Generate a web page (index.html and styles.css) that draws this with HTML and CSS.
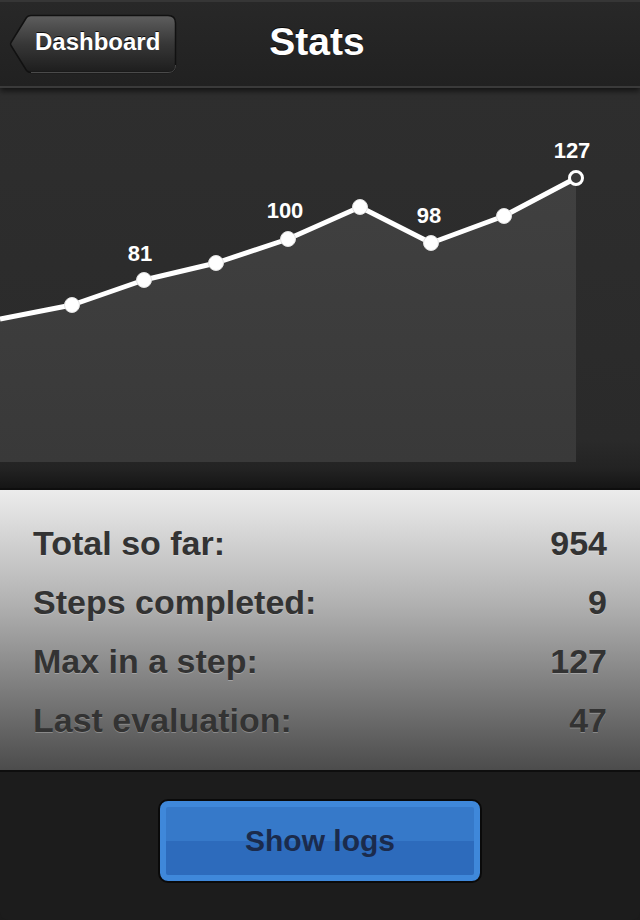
FILE: index.html
```html
<!DOCTYPE html>
<html lang="en">
<head>
    <meta charset="UTF-8">
    <meta name="viewport" content="width=device-width, initial-scale=1.0">
    <title>Stats</title>
    <link rel="stylesheet" href="styles.css">
</head>
<body>
    <header class="nav">
        <a class="back" href="#">
            <svg class="back-shape" width="168" height="60" viewBox="0 0 168 60">
                <defs>
                    <linearGradient id="backFill" x1="0" y1="0" x2="0" y2="1">
                        <stop offset="0" stop-color="#5e5e5e"/>
                        <stop offset="0.5" stop-color="#373737"/>
                        <stop offset="1" stop-color="#1d1d1d"/>
                    </linearGradient>
                </defs>
                <path d="M22 1.5 H159 Q166.5 1.5 166.5 9 V51 Q166.5 58.5 159 58.5 H22 Q19 58.5 17.5 56.5 L2 31.5 Q1 30 2 28.5 L17.5 3.5 Q19 1.5 22 1.5 Z"
                      fill="url(#backFill)" stroke="#111" stroke-width="1.5"/>
                <path d="M22 58.5 H159 Q166.5 58.5 166.5 51" fill="none" stroke="#4a4a4a" stroke-width="1"/>
            </svg>
            <span class="back-label">Dashboard</span>
        </a>
        <h1>Stats</h1>
        <div class="nav-right"></div>
    </header>

    <section class="chart">
        <svg width="640" height="400" viewBox="0 0 640 400">
            <defs>
                <linearGradient id="area" x1="0" y1="0" x2="0" y2="1">
                    <stop offset="0" stop-color="#404040"/>
                    <stop offset="1" stop-color="#393939"/>
                </linearGradient>
            </defs>
            <polygon points="0,229 72,217 144,192 216,175 288,151 360,119 431,155 504,128 576,90 576,374 0,374" fill="url(#area)"/>
            <polyline points="0,231 72,217 144,192 216,175 288,151 360,119 431,155 504,128 576,90"
                      fill="none" stroke="#fff" stroke-width="5" stroke-linejoin="round"/>
            <g class="dots">
                <circle cx="72" cy="217" r="7.5"/>
                <circle cx="144" cy="192" r="7.5"/>
                <circle cx="216" cy="175" r="7.5"/>
                <circle cx="288" cy="151" r="7.5"/>
                <circle cx="360" cy="119" r="7.5"/>
                <circle cx="431" cy="155" r="7.5"/>
                <circle cx="504" cy="128" r="7.5"/>
            </g>
            <circle cx="576" cy="90" r="6.5" fill="#3a3a3a" stroke="#fff" stroke-width="3"/>
            <g class="labels">
                <text x="140" y="173">81</text>
                <text x="285" y="130">100</text>
                <text x="429" y="135">98</text>
                <text x="572" y="70">127</text>
            </g>
        </svg>
    </section>

    <section class="stats">
        <div class="row"><span>Total so far:</span><span>954</span></div>
        <div class="row"><span>Steps completed:</span><span>9</span></div>
        <div class="row"><span>Max in a step:</span><span>127</span></div>
        <div class="row"><span>Last evaluation:</span><span>47</span></div>
    </section>

    <footer class="actions">
        <button class="show-logs">Show logs</button>
    </footer>
</body>
</html>
```

FILE: styles.css
```css
body {
    margin: 0;
    width: 640px;
    height: 920px;
    overflow: hidden;
    background: #1b1b1b;
    font-family: 'Liberation Sans', Arial, sans-serif;
}

.nav {
    height: 84px;
    border-top: 2px solid #363636;
    border-bottom: 2px solid #3a3a3a;
    background: linear-gradient(#282828, #212121);
    display: grid;
    grid-template-columns: 1fr auto 1fr;
    align-items: center;
    box-shadow: 0 3px 6px rgba(0, 0, 0, 0.6);
    position: relative;
    z-index: 2;
}

.back {
    position: relative;
    width: 168px;
    height: 60px;
    margin-left: 9px;
    display: flex;
    align-items: center;
    text-decoration: none;
}

.back-shape {
    position: absolute;
    left: 0;
    top: 0;
}

.back-label {
    position: relative;
    padding-left: 26px;
    padding-bottom: 4px;
    color: #fff;
    font-size: 24px;
    font-weight: bold;
    text-shadow: 0 -1px 0 rgba(0, 0, 0, 0.8);
}

.nav h1 {
    margin: -5px 0 0 -6px;
    color: #fff;
    font-size: 39px;
    font-weight: bold;
    text-shadow: 0 -1px 0 rgba(0, 0, 0, 0.8);
}

.chart {
    height: 400px;
    background: linear-gradient(#2e2e2e, #2a2a2a 88%, #232323 95%, #151515);
}

.chart svg {
    display: block;
}

.dots circle {
    fill: #fff;
    stroke: #e2e2e2;
    stroke-width: 1;
}

.labels text {
    fill: #fff;
    font-family: 'Liberation Sans', Arial, sans-serif;
    font-size: 22px;
    font-weight: bold;
    text-anchor: middle;
}

.stats {
    height: 236px;
    padding: 24px 33px 20px 33px;
    border-top: 2px solid #0e0e0e;
    border-bottom: 2px solid #0e0e0e;
    background: linear-gradient(#ececec, #b2b2b2 40%, #878787 65%, #4c4c4c);
}

.row {
    height: 59px;
    display: flex;
    justify-content: space-between;
    align-items: center;
    color: #333;
    font-size: 34px;
    font-weight: bold;
    text-shadow: 0 1px 0 rgba(255, 255, 255, 0.25);
}

.actions {
    height: 148px;
    display: flex;
    justify-content: center;
    padding-top: 27px;
    box-sizing: border-box;
    background: #1c1c1c;
    border-radius: 0 0 8px 8px;
}

.show-logs {
    width: 324px;
    height: 84px;
    border: 2px solid #0a0a0a;
    border-radius: 10px;
    box-shadow: inset 0 0 0 6px #3f88da;
    background: linear-gradient(#3679c9 50%, #2d6bbc 50%);
    color: #1b2b4c;
    font-family: 'Liberation Sans', Arial, sans-serif;
    font-size: 30px;
    font-weight: bold;
    cursor: pointer;
}
```
